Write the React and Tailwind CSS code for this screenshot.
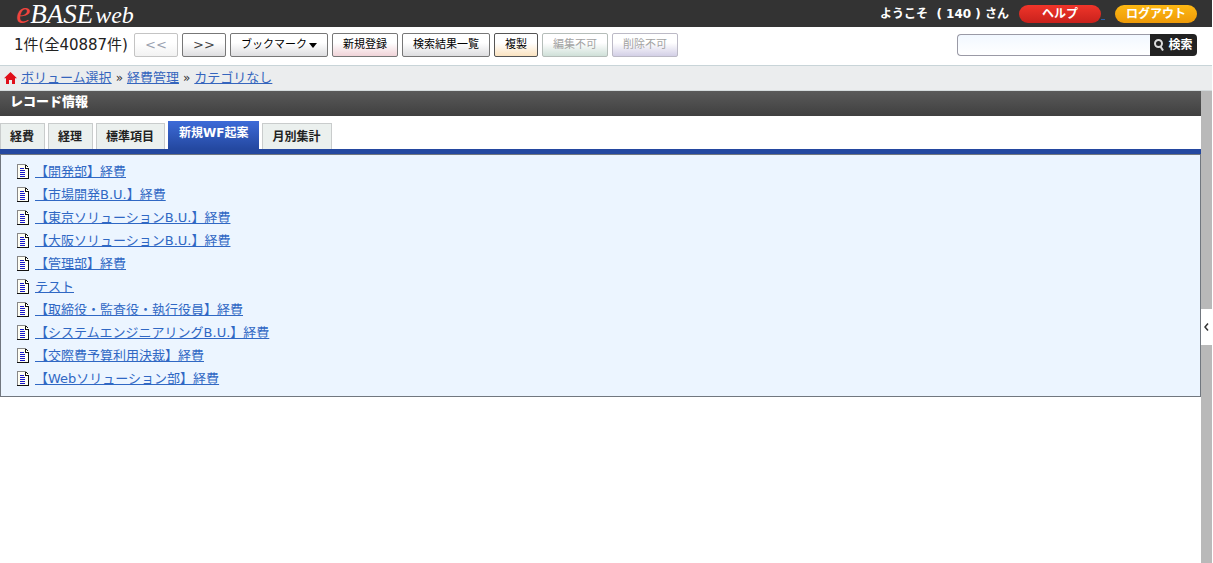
import React, { useState } from 'react';

const toolbarButtons = [
  { label: '<<', look: 'w-11 border-[#c4c4c4] to-[#f2f2f2] text-[13px] text-gray-400', disabled: true },
  { label: '>>', look: 'w-11 border-[#777] to-[#dedee0] text-[13px] text-[#444]' },
  { label: 'ブックマーク', look: 'border-[#777] to-[#dedee0] text-[11px] text-black', menu: true },
  { label: '新規登録', look: 'border-[#777] to-[#f0d3d8] text-[11px] text-black' },
  { label: '検索結果一覧', look: 'border-[#777] to-[#dedee0] text-[11px] text-black' },
  { label: '複製', look: 'border-[#555] to-[#fbe3c0] text-[11px] text-black' },
  { label: '編集不可', look: 'border-[#b5bdb9] to-[#cfe0d8] text-[11px] text-[#a3a3a3]', disabled: true },
  { label: '削除不可', look: 'border-[#bcbac6] to-[#d3cfe6] text-[11px] text-[#a3a3a3]', disabled: true },
];

const crumbs = ['ボリューム選択', '経費管理', 'カテゴリなし'];

const tabs = ['経費', '経理', '標準項目', '新規WF起案', '月別集計'];

const records = [
  '【開発部】経費',
  '【市場開発B.U.】経費',
  '【東京ソリューションB.U.】経費',
  '【大阪ソリューションB.U.】経費',
  '【管理部】経費',
  'テスト',
  '【取締役・監査役・執行役員】経費',
  '【システムエンジニアリングB.U.】経費',
  '【交際費予算利用決裁】経費',
  '【Webソリューション部】経費',
];

function DocIcon() {
  return (
    <svg width="12" height="15" viewBox="0 0 12 15" shapeRendering="crispEdges" aria-hidden="true">
      <path d="M0 0h8l4 4v11H0z" fill="#fffff4" />
      <path d="M0 0h9v1H1v13H0z" fill="#888" />
      <path d="M9 1h1v1H9zM10 2h1v1h-1zM8 1h1v3h3v1H8zM11 4h1v11h-1zM0 14h12v1H0z" fill="#111" />
      <path d="M3 4h4v1H3zM3 6h5v1H3zM3 8h5v1H3zM3 10h5v1H3zM3 12h5v1H3z" fill="#1616c8" />
    </svg>
  );
}

function HomeIcon() {
  return (
    <svg width="13" height="12" viewBox="0 0 13 12" fill="#e00f1a" aria-hidden="true">
      <path d="M6.5 0 13 6.2h-2V12H8V8H5v4H2V6.2H0z" />
    </svg>
  );
}

function Header() {
  return (
    <header className="flex h-[27px] items-center justify-between bg-[#333] pl-4 pr-[15px]">
      <a href="#" className="flex items-baseline font-[family-name:'Liberation_Serif',serif] italic leading-7 text-white">
        <span className="text-[32px] leading-7 text-[#f0443e]">e</span>
        <span className="text-[27px] leading-7">BASE</span>
        <span className="ml-0.5 text-2xl leading-7">web</span>
      </a>
      <div className="flex items-center text-xs font-bold text-white">
        <span className="mr-2.5 whitespace-pre">ようこそ  ( 140 ) さん</span>
        <a href="#" className="w-[82px] rounded-full bg-linear-to-b from-[#f0352a] to-[#c9211c] text-center leading-[18px]">
          ヘルプ
        </a>
        <span className="h-3 w-1 border-b border-[#2f5fa8]" />
        <a href="#" className="ml-2.5 w-[82px] rounded-full bg-linear-to-b from-[#fdb813] to-[#ee9a08] text-center leading-[18px]">
          ログアウト
        </a>
      </div>
    </header>
  );
}

function Toolbar() {
  return (
    <div className="flex h-[39px] items-center justify-between border-b border-[#c8d4d8] bg-white pb-0.5 pl-3.5 pr-[15px]">
      <div className="flex items-center gap-1">
        <span className="mr-0.5 whitespace-nowrap text-[15px] text-[#222]">1件(全40887件)</span>
        {toolbarButtons.map((b) => (
          <button
            key={b.label}
            disabled={b.disabled}
            className={`flex h-6 items-center justify-center gap-0.5 whitespace-nowrap rounded-xs border bg-linear-to-b from-white from-40% px-2.5 ${b.look}`}
          >
            {b.label}
            {b.menu && (
              <svg width="8" height="5" viewBox="0 0 8 5" aria-hidden="true">
                <path d="M0 0h8L4 5z" />
              </svg>
            )}
          </button>
        ))}
      </div>
      <form className="flex h-[22px]" onSubmit={(e) => e.preventDefault()}>
        <input
          type="text"
          aria-label="検索"
          className="w-[193px] rounded-l border border-r-0 border-[#9a9aa6] bg-linear-to-b from-[#f2f8ff] to-white px-1 text-xs outline-none"
        />
        <button className="flex w-[47px] items-center justify-center gap-1 rounded-r bg-[#222] text-xs font-bold text-white">
          <svg width="10" height="12" viewBox="0 0 10 12" fill="none" stroke="#ddd" strokeWidth="2" aria-hidden="true">
            <circle cx="4.5" cy="4.5" r="3.5" />
            <path d="m6.5 7.5 2.5 4" />
          </svg>
          検索
        </button>
      </form>
    </div>
  );
}

export default function App() {
  const [active, setActive] = useState('新規WF起案');

  return (
    <div className="flex min-h-screen flex-col bg-white pr-px font-[family-name:'DejaVu_Sans','Noto_Sans_CJK_JP',sans-serif]">
      <Header />
      <Toolbar />
      <nav className="flex h-[25px] items-center gap-1 border-b border-[#d5dbdd] bg-[#ebedee] pl-1 text-[13px]">
        <HomeIcon />
        {crumbs.map((c, i) => (
          <React.Fragment key={c}>
            {i > 0 && <span className="text-xs text-[#333]">»</span>}
            <a href="#" className="text-[#3565bd] underline">{c}</a>
          </React.Fragment>
        ))}
      </nav>

      <div className="flex flex-1">
        <main className="min-w-0 flex-1">
          <h1 className="h-[25px] bg-linear-to-b from-[#5a5a5a] to-[#404040] pl-2.5 text-[13px] font-black leading-[22px] text-white">
            レコード情報
          </h1>
          <div role="tablist" className="flex h-[33px] items-end gap-[3px] text-xs font-bold">
            {tabs.map((t) => (
              <button
                key={t}
                role="tab"
                aria-selected={t === active}
                onClick={() => setActive(t)}
                className={
                  t === active
                    ? 'h-7 bg-linear-to-b from-[#3d6bd8] to-[#2448a0] px-[11px] pb-1 text-white'
                    : 'h-[26px] border border-b-0 border-[#c9cccc] bg-[#ebf0ee] pl-[9px] pr-2.5 text-[#222]'
                }
              >
                {t}
              </button>
            ))}
          </div>
          <div className="h-[5px] bg-[#2448a0]" />
          <ul className="border border-[#71777f] bg-[#ecf5ff] pb-1.5 pl-4 pt-[5px]">
            {records.map((r) => (
              <li key={r} className="flex h-[23px] items-center gap-1.5">
                <DocIcon />
                <a href="#" className="text-[13px] text-[#3068c4] underline">{r}</a>
              </li>
            ))}
          </ul>
        </main>
        <aside className="flex w-[11px] items-center bg-[#b9b9b9]">
          <button aria-label="パネルを開く" className="flex h-9 w-full items-center justify-center bg-white">
            <svg width="5" height="8" viewBox="0 0 5 8" fill="none" stroke="#333" strokeWidth="1.5" aria-hidden="true">
              <path d="M4 .5 1 4l3 3.5" />
            </svg>
          </button>
        </aside>
      </div>
    </div>
  );
}
